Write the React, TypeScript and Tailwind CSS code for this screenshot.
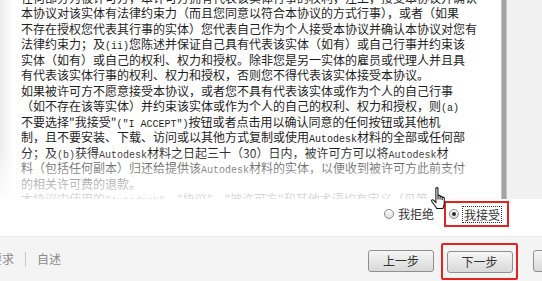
import React from "react";

const M = ({ children }: { children: React.ReactNode }) => (
  <span className="font-['Liberation_Mono',monospace] text-[10px] leading-[0]">{children}</span>
);

const Line = ({ children }: { children: React.ReactNode }) => (
  <div className="h-[15.5px]">{children}</div>
);

function Radio({ checked }: { checked?: boolean }) {
  return (
    <span className="w-[10px] h-[10px] rounded-full border border-[#8a8a8a] bg-linear-to-b from-white to-[#dcdcdc] flex items-center justify-center">
      {checked && <span className="w-[4px] h-[4px] rounded-full bg-[#2a2a2a]" />}
    </span>
  );
}

function Button({ label }: { label: string }) {
  return (
    <div className="w-[66px] h-[22px] shrink-0 rounded-[3px] border border-[#8f8f8f] bg-linear-to-b from-[#f6f6f6] to-[#d9d9d9] flex items-center justify-center text-[12px] text-[#333]">
      {label}
    </div>
  );
}

function HandCursor() {
  return (
    <svg width="17" height="23" viewBox="0 0 16 22" className="absolute left-[430px] top-[187px]">
      <path
        d="M5.5 1.5C5.5 0.3 7.5 0.3 7.5 1.5V8.5C7.5 7.6 9.5 7.6 9.5 8.5V9.5C9.5 8.6 11.5 8.6 11.5 9.5V10.5C11.5 9.6 13.5 9.6 13.5 10.5V15.5C13.5 17.3 12.7 18.5 12.3 20.5H6.3C5.3 18.6 3.4 16.6 1.6 13.8C0.9 12.6 2.1 11.6 3.1 12.5L5.5 14.8Z"
        fill="white"
        stroke="#111"
        strokeWidth="1"
      />
      <path d="M7.5 8.5V12M9.5 9.5V12M11.5 10.5V12.5" stroke="#111" strokeWidth="1" />
    </svg>
  );
}

export default function App() {
  return (
    <div className="relative w-[542px] h-[281px] overflow-hidden bg-white font-['Noto_Sans_CJK_SC',sans-serif]">
      {/* agreement text */}
      <div className="flex h-[199px]">
        <div className="relative w-[501px] overflow-hidden bg-[linear-gradient(to_right,#ededed,#fff_14px)]">
          <div className="-mt-[10.25px] pl-[21px] text-[12px] leading-[15.5px] text-[#1e1e1e] whitespace-nowrap">
            <Line>任何部分为被许可方，本许可方拥有代表该实体行事的权利，注上，接受本协议并确认</Line>
            <Line>本协议对该实体有法律约束力（而且您同意以符合本协议的方式行事），或者（如果</Line>
            <Line>不存在授权您代表其行事的实体）您代表自己作为个人接受本协议并确认本协议对您有</Line>
            <Line>法律约束力；及<M>(ii)</M>您陈述并保证自己具有代表该实体（如有）或自己行事并约束该</Line>
            <Line>实体（如有）或自己的权利、权力和授权。除非您是另一实体的雇员或代理人并且具</Line>
            <Line>有代表该实体行事的权利、权力和授权，否则您不得代表该实体接受本协议。</Line>
            <Line>如果被许可方不愿意接受本协议，或者您不具有代表该实体或作为个人的自己行事</Line>
            <Line>（如不存在该等实体）并约束该实体或作为个人的自己的权利、权力和授权，则<M>(a)</M></Line>
            <Line>不要选择"我接受"<M>("I ACCEPT")</M>按钮或者点击用以确认同意的任何按钮或其他机</Line>
            <Line>制，且不要安装、下载、访问或以其他方式复制或使用<M>Autodesk</M>材料的全部或任何部</Line>
            <Line>分；及<M>(b)</M>获得<M>Autodesk</M>材料之日起三十（30）日内，被许可方可以将<M>Autodesk</M>材</Line>
            <Line>料（包括任何副本）归还给提供该<M>Autodesk</M>材料的实体，以便收到被许可方此前支付</Line>
            <Line>的相关许可费的退款。</Line>
            <Line>本协议中使用的<M>"Autodesk"</M>、"协议"、"被许可方"和其他术语均有定义（见第</Line>
          </div>
          <div className="absolute inset-x-0 bottom-0 h-[50px] bg-linear-to-b from-white/0 via-white/55 to-white/85" />
        </div>
        <div className="w-[6px] bg-[#a3a3a3] border-x border-[#c4c4c4]" />
        <div className="flex-1 bg-[#f1f1f1]" />
      </div>

      {/* accept / decline */}
      <div className="flex justify-end items-start h-[37px] pt-[2px] pr-[33px] text-[12px] text-[#333]">
        <div className="flex items-center gap-[4px] h-[26px] mr-[10px]">
          <Radio />
          <span>我拒绝</span>
        </div>
        <div className="w-[65px] h-[26px] border-2 border-[#e2231f] flex items-center gap-[3px] pl-[3px]">
          <Radio checked />
          <span className="border border-dotted border-[#333] leading-[15px] px-[1px]">我接受</span>
        </div>
      </div>

      {/* footer */}
      <div className="flex h-[45px] bg-[#f4f4f4] border-t border-[#ececec] text-[12px] text-[#8a8a8a]">
        <div className="flex items-center gap-[11px] h-[44px] -ml-[10px]">
          <span>要求</span>
          <span className="w-px h-[15px] bg-[#c9c9c9]" />
          <span>自述</span>
        </div>
        <div className="ml-auto flex items-start pt-[6px] -mr-[57px]">
          <div className="pt-[7px]">
            <Button label="上一步" />
          </div>
          <div className="ml-[7px] w-[77px] h-[37px] border-2 border-[#e2231f] rounded-[2px] flex items-center justify-center">
            <Button label="下一步" />
          </div>
          <div className="ml-[15px] pt-[7px]">
            <Button label="取消" />
          </div>
        </div>
      </div>

      <HandCursor />
    </div>
  );
}
